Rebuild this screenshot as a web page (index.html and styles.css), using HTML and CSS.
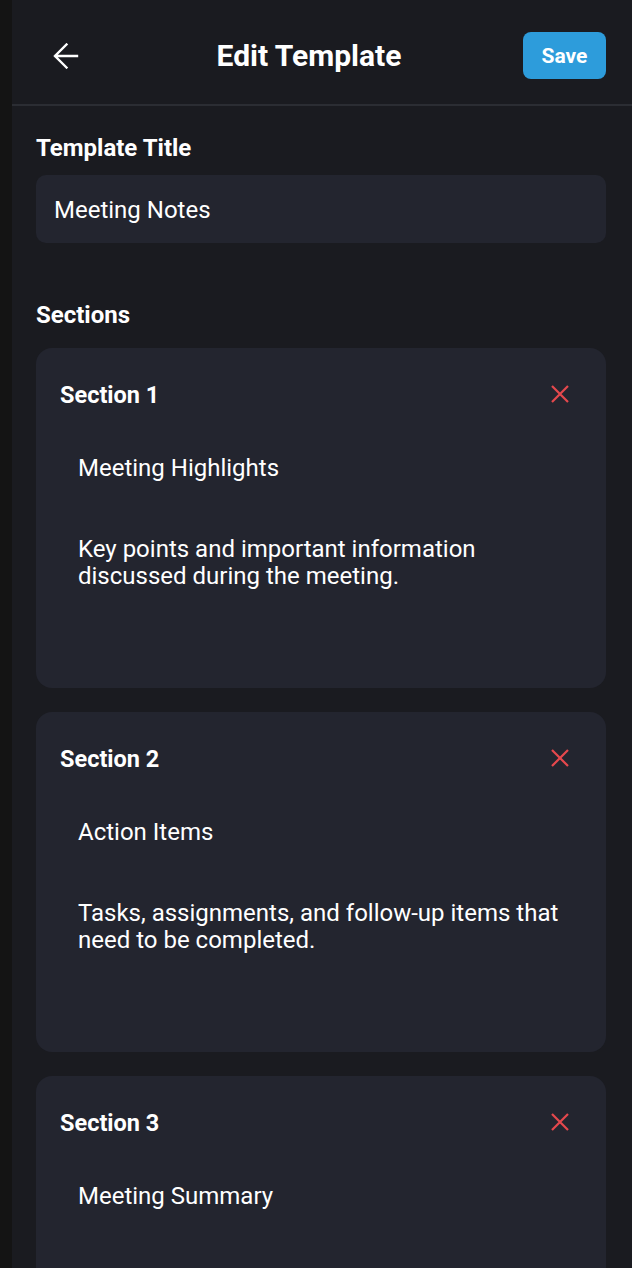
FILE: index.html
```html
<!DOCTYPE html>
<html lang="en">
<head>
<meta charset="utf-8">
<title>Edit Template</title>
<link rel="stylesheet" href="styles.css">
</head>
<body>
<div class="app">
  <header class="topbar">
    <button class="back" aria-label="Back">
      <svg width="26" height="26" viewBox="0 0 26 26" fill="none" stroke="#ffffff" stroke-width="2.4" stroke-linecap="square" stroke-linejoin="miter">
        <path d="M13.5 1.5 L2 13 L13.5 24.5 M2.5 13 H24"/>
      </svg>
    </button>
    <h1 class="title">Edit Template</h1>
    <button class="save">Save</button>
  </header>

  <main class="content">
    <h2 class="label">Template Title</h2>
    <div class="field">Meeting Notes</div>

    <h2 class="label sections-label">Sections</h2>

    <section class="card">
      <div class="card-head">
        <h3 class="card-title">Section 1</h3>
        <button class="remove" aria-label="Remove section">
          <svg width="18" height="18" viewBox="0 0 18 18" fill="none" stroke="#e5484d" stroke-width="2.2"><path d="M1 1 L17 17 M17 1 L1 17"/></svg>
        </button>
      </div>
      <div class="input">Meeting Highlights</div>
      <div class="input multi">Key points and important information discussed during the meeting.</div>
    </section>

    <section class="card">
      <div class="card-head">
        <h3 class="card-title">Section 2</h3>
        <button class="remove" aria-label="Remove section">
          <svg width="18" height="18" viewBox="0 0 18 18" fill="none" stroke="#e5484d" stroke-width="2.2"><path d="M1 1 L17 17 M17 1 L1 17"/></svg>
        </button>
      </div>
      <div class="input">Action Items</div>
      <div class="input multi">Tasks, assignments, and follow-up items that need to be completed.</div>
    </section>

    <section class="card">
      <div class="card-head">
        <h3 class="card-title">Section 3</h3>
        <button class="remove" aria-label="Remove section">
          <svg width="18" height="18" viewBox="0 0 18 18" fill="none" stroke="#e5484d" stroke-width="2.2"><path d="M1 1 L17 17 M17 1 L1 17"/></svg>
        </button>
      </div>
      <div class="input">Meeting Summary</div>
      <div class="input multi"></div>
    </section>
  </main>
</div>
</body>
</html>
```

FILE: styles.css
```css
* { box-sizing: border-box; }

html, body {
  margin: 0;
  padding: 0;
}

body {
  background: #141414;
  padding-left: 12px;
  font-family: Roboto, "Noto Sans", "Liberation Sans", sans-serif;
  color: #ffffff;
}

.app {
  background: #1a1b20;
  min-height: 100vh;
}

.topbar {
  display: flex;
  align-items: center;
  justify-content: space-between;
  padding: 32px 26px 25px 24px;
  border-bottom: 2px solid #2b2d33;
}

.back {
  width: 59px;
  height: 47px;
  padding: 0 0 0 17px;
  border: 0;
  background: transparent;
  display: flex;
  align-items: center;
}

.back svg { display: block; }

.title {
  margin: 0;
  font-size: 30px;
  font-weight: 700;
  line-height: 47px;
}

.save {
  width: 83px;
  height: 47px;
  border: 0;
  border-radius: 8px;
  background: #2d9cdb;
  color: #ffffff;
  font-family: Roboto, "Noto Sans", "Liberation Sans", sans-serif;
  font-size: 21px;
  font-weight: 700;
  padding: 0;
}

.content {
  padding: 26px 26px 0 24px;
}

.label {
  margin: 0 0 11px;
  font-size: 24px;
  font-weight: 700;
  line-height: 32px;
}

.sections-label {
  margin-top: 56px;
  margin-bottom: 17px;
}

.field {
  height: 68px;
  display: flex;
  align-items: center;
  padding: 2px 18px 0;
  border-radius: 10px;
  background: #23252f;
  font-size: 24px;
}

.card {
  background: #23252f;
  border-radius: 16px;
  padding: 24px;
  margin-bottom: 24px;
}

.card-head {
  display: flex;
  align-items: center;
  justify-content: space-between;
  height: 44px;
}

.card-title {
  margin: 0;
  padding-top: 2px;
  font-size: 23.5px;
  font-weight: 700;
}

.remove {
  width: 44px;
  height: 44px;
  border: 0;
  padding: 0;
  background: transparent;
  display: flex;
  align-items: center;
  justify-content: center;
}

.remove svg { display: block; }

.input {
  margin-top: 21px;
  padding: 18px;
  font-size: 24px;
  line-height: 27px;
}

.input.multi {
  margin-top: 18px;
  height: 146px;
}
```
